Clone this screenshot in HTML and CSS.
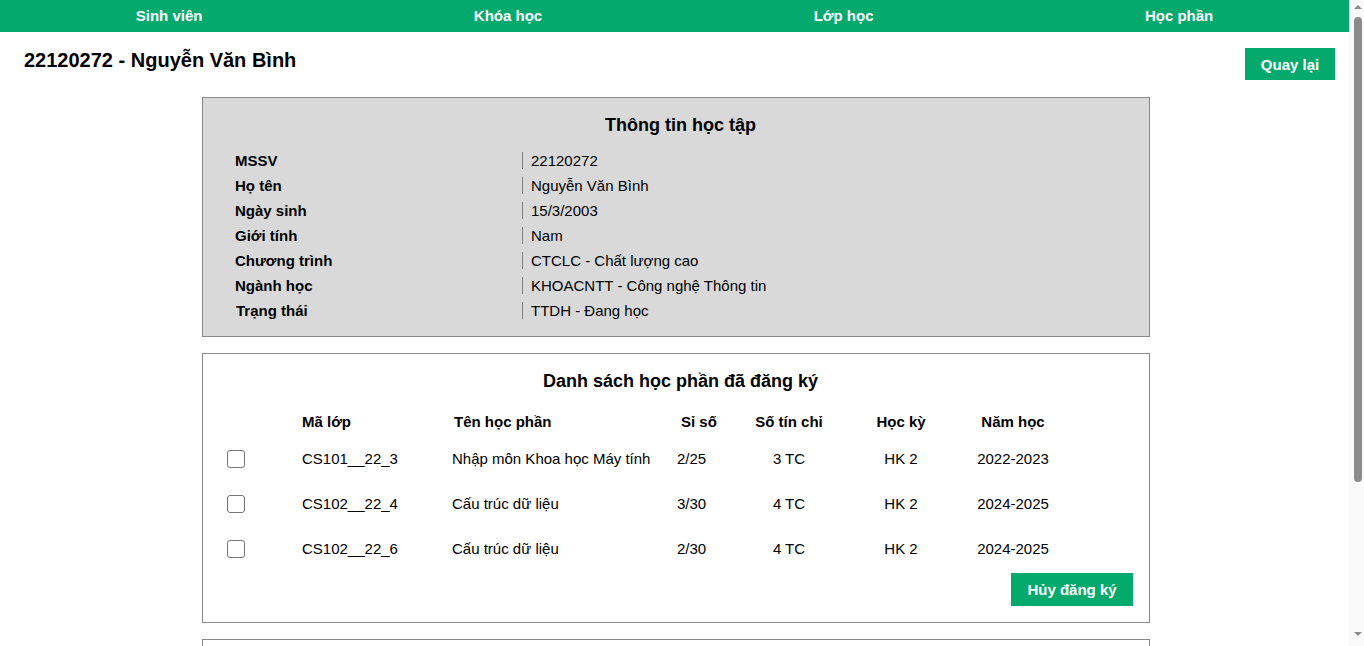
FILE: index.html
```html
<!DOCTYPE html>
<html lang="vi">
<head>
<meta charset="utf-8">
<title>Thông tin sinh viên</title>
<link rel="stylesheet" href="styles.css">
</head>
<body>
<nav class="topnav">
  <a class="nav-item" href="#">Sinh viên</a>
  <a class="nav-item" href="#">Khóa học</a>
  <a class="nav-item" href="#">Lớp học</a>
  <a class="nav-item" href="#">Học phần</a>
</nav>

<header class="page-head">
  <h1 class="page-title">22120272 - Nguyễn Văn Bình</h1>
  <button class="btn btn-back">Quay lại</button>
</header>

<main class="content">
  <section class="card card-info">
    <h2 class="card-title">Thông tin học tập</h2>
    <div class="info-grid">
      <div class="info-label">MSSV</div><div class="info-value">22120272</div>
      <div class="info-label">Họ tên</div><div class="info-value">Nguyễn Văn Bình</div>
      <div class="info-label">Ngày sinh</div><div class="info-value">15/3/2003</div>
      <div class="info-label">Giới tính</div><div class="info-value">Nam</div>
      <div class="info-label">Chương trình</div><div class="info-value">CTCLC - Chất lượng cao</div>
      <div class="info-label">Ngành học</div><div class="info-value">KHOACNTT - Công nghệ Thông tin</div>
      <div class="info-label info-label-shift">Trạng thái</div><div class="info-value">TTDH - Đang học</div>
    </div>
  </section>

  <section class="card card-list">
    <h2 class="card-title">Danh sách học phần đã đăng ký</h2>
    <div class="course-table">
      <div class="row row-head">
        <div class="cell"></div>
        <div class="cell">Mã lớp</div>
        <div class="cell head-name">Tên học phần</div>
        <div class="cell head-size">Sỉ số</div>
        <div class="cell center">Số tín chỉ</div>
        <div class="cell center">Học kỳ</div>
        <div class="cell center">Năm học</div>
      </div>
      <div class="row">
        <div class="cell"><input type="checkbox" class="check"></div>
        <div class="cell">CS101__22_3</div>
        <div class="cell">Nhập môn Khoa học Máy tính</div>
        <div class="cell">2/25</div>
        <div class="cell center">3 TC</div>
        <div class="cell center">HK 2</div>
        <div class="cell center">2022-2023</div>
      </div>
      <div class="row">
        <div class="cell"><input type="checkbox" class="check"></div>
        <div class="cell">CS102__22_4</div>
        <div class="cell">Cấu trúc dữ liệu</div>
        <div class="cell">3/30</div>
        <div class="cell center">4 TC</div>
        <div class="cell center">HK 2</div>
        <div class="cell center">2024-2025</div>
      </div>
      <div class="row">
        <div class="cell"><input type="checkbox" class="check"></div>
        <div class="cell">CS102__22_6</div>
        <div class="cell">Cấu trúc dữ liệu</div>
        <div class="cell">2/30</div>
        <div class="cell center">4 TC</div>
        <div class="cell center">HK 2</div>
        <div class="cell center">2024-2025</div>
      </div>
    </div>
    <div class="actions">
      <button class="btn btn-cancel">Hủy đăng ký</button>
    </div>
  </section>

  <section class="card card-more"></section>
</main>

<aside class="scrollbar" aria-hidden="true">
  <span class="sb-arrow sb-up"></span>
  <span class="sb-track"><span class="sb-thumb"></span></span>
  <span class="sb-arrow sb-down"></span>
</aside>
</body>
</html>
```

FILE: styles.css
```css
html, body {
  padding: 0;
}

html {
  margin: 0;
}

body {
  margin: 0 15px 0 0;
  font-family: "Liberation Sans", Arial, sans-serif;
  font-size: 15px;
  color: #000;
  background: #fff;
}

.topnav {
  display: flex;
  height: 32px;
  background: #04aa6d;
}

.nav-item {
  flex: 1 1 auto;
  color: #fff;
  font-weight: bold;
  font-size: 15px;
  line-height: 32px;
  text-align: center;
  text-decoration: none;
}

.page-head {
  display: flex;
  justify-content: space-between;
  align-items: flex-start;
  padding: 16px 14px 0 24px;
}

.page-title {
  margin: 1px 0 0;
  font-size: 20px;
  line-height: 23px;
  font-weight: bold;
}

.btn {
  font-family: "Liberation Sans", Arial, sans-serif;
  font-weight: bold;
  font-size: 15px;
  color: #fff;
  background: #04aa6d;
  border: none;
  padding: 0;
  white-space: nowrap;
  cursor: pointer;
}

.btn-back {
  height: 32px;
  width: 90px;
}

.btn-cancel {
  height: 33px;
  width: 122px;
}

.content {
  padding: 17px 0 40px 3px;
}

.card {
  width: 946px;
  margin: 0 auto 16px;
  border: 1px solid #888;
  box-sizing: content-box;
}

.card-info {
  background: #d9d9d9;
  padding: 17px 0 17px;
}

.card-title {
  margin: 0 0 16px;
  font-size: 18px;
  line-height: 21px;
  font-weight: bold;
  text-align: center;
}

.card-info .card-title {
  padding-left: 9px;
}

.info-grid {
  display: grid;
  grid-template-columns: 287px 1fr;
  row-gap: 8px;
  padding-left: 32px;
  line-height: 17px;
}

.info-label {
  font-weight: bold;
}

.info-label-shift {
  padding-left: 1px;
}

.info-value {
  border-left: 1px solid #808080;
  padding-left: 8px;
}

.card-list {
  padding: 17px 16px 16px 24px;
  width: 906px;
}

.card-list .card-title {
  margin-bottom: 14px;
  padding-left: 1px;
}

.row {
  display: grid;
  grid-template-columns: 75px 150px 225px 62px 100px 124px 100px;
  align-items: center;
  height: 45px;
}

.row-head {
  height: 30px;
  font-weight: bold;
}

.center {
  text-align: center;
}

.head-name {
  padding-left: 2px;
}

.head-size {
  padding-left: 4px;
}

.check {
  appearance: none;
  -webkit-appearance: none;
  display: block;
  width: 18px;
  height: 18px;
  margin: 0;
  border: 1px solid #767676;
  border-radius: 3px;
  background: #fff;
}

.actions {
  display: flex;
  justify-content: flex-end;
  margin-top: 2px;
}

.card-more {
  min-height: 160px;
}

/* simulated browser scrollbar */
.scrollbar {
  position: fixed;
  top: 0;
  right: 0;
  width: 15px;
  height: 100vh;
  background: #f9f9f9;
  display: flex;
  flex-direction: column;
  align-items: center;
}

.sb-arrow {
  width: 0;
  height: 0;
  border-left: 4px solid transparent;
  border-right: 4px solid transparent;
  margin-left: 3px;
}

.sb-up {
  margin-top: 5px;
  border-bottom: 4px solid #8b8b8b;
}

.sb-down {
  margin-bottom: 10px;
  border-top: 4px solid #8b8b8b;
}

.sb-track {
  flex: 1;
  width: 100%;
  display: flex;
  justify-content: center;
  padding-top: 8px;
}

.sb-thumb {
  width: 8px;
  height: 465px;
  margin-left: 3px;
  background: #8b8b8b;
  border-radius: 4px;
}
```
